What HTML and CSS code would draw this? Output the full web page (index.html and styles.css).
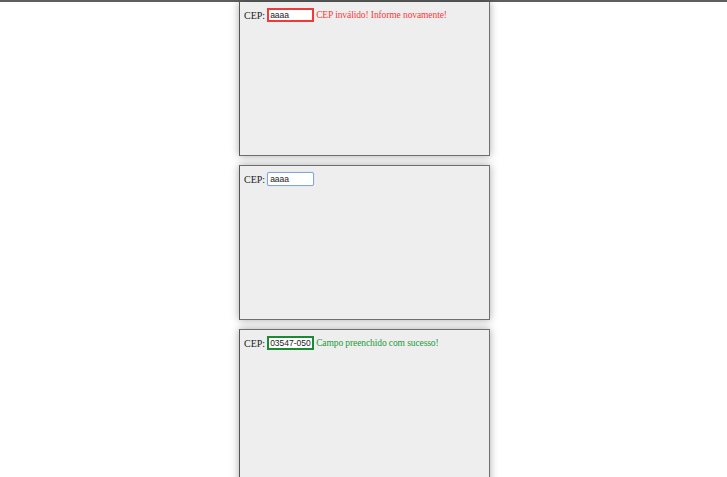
FILE: index.html
```html
<!DOCTYPE html>
<html lang="pt">
<head>
<meta charset="utf-8">
<link rel="stylesheet" href="styles.css">
</head>
<body>
<div class="topbar"></div>
<div class="stack">
  <div class="box box-first">
    <div class="row">
      <label class="lbl">CEP:</label>
      <input class="cep cep-error" type="text" value="aaaa">
      <span class="msg msg-error">CEP inválido! Informe novamente!</span>
    </div>
  </div>
  <div class="box">
    <div class="row">
      <label class="lbl">CEP:</label>
      <input class="cep cep-focus" type="text" value="aaaa">
    </div>
  </div>
  <div class="box box-last">
    <div class="row">
      <label class="lbl">CEP:</label>
      <input class="cep cep-ok" type="text" value="03547-050">
      <span class="msg msg-ok">Campo preenchido com sucesso!</span>
    </div>
  </div>
</div>
</body>
</html>
```
FILE: styles.css
```css
html, body {
  margin: 0;
  padding: 0;
  background: #ffffff;
  overflow: hidden;
}
body {
  font-family: "Liberation Serif", "Times New Roman", serif;
  font-size: 10px;
  color: #222;
}
.topbar {
  height: 2px;
  background: #5e5e5e;
}
.stack {
  display: flex;
  flex-direction: column;
  align-items: center;
  gap: 9px;
  padding-left: 2px;
}
.box {
  box-sizing: border-box;
  width: 251px;
  height: 155px;
  background: #eeeeee;
  border: 1px solid #6f6f6f;
  border-left-color: #555;
  box-shadow: 0 0 8px rgba(0, 0, 0, 0.34);
  padding: 6px 0 0 4px;
}
.box-first {
  border-top: none;
  height: 154px;
}
.box-last {
  height: 200px;
}
.row {
  display: flex;
  align-items: center;
  gap: 2px;
  height: 14px;
}
.lbl {
  font-size: 10px;
}
.cep {
  box-sizing: border-box;
  width: 47px;
  height: 14px;
  margin: 0;
  padding: 0 0 0 1px;
  font-family: "Liberation Sans", Arial, sans-serif;
  font-size: 8.5px;
  color: #222;
  background: #fff;
  border: 2px solid #999;
  outline: none;
}
.cep-error {
  border-color: #f03a3a;
}
.cep-focus {
  border: 1px solid #7fa5dc;
  border-radius: 2px;
  box-shadow: 0 0 1px #9cbdf0;
  padding-left: 2px;
}
.cep-ok {
  border-color: #1c8a32;
}
.msg {
  margin-left: 0;
  font-size: 9.5px;
  letter-spacing: -0.1px;
}
.msg-error {
  color: #f23b3b;
}
.msg-ok {
  color: #1a9a38;
}
```
